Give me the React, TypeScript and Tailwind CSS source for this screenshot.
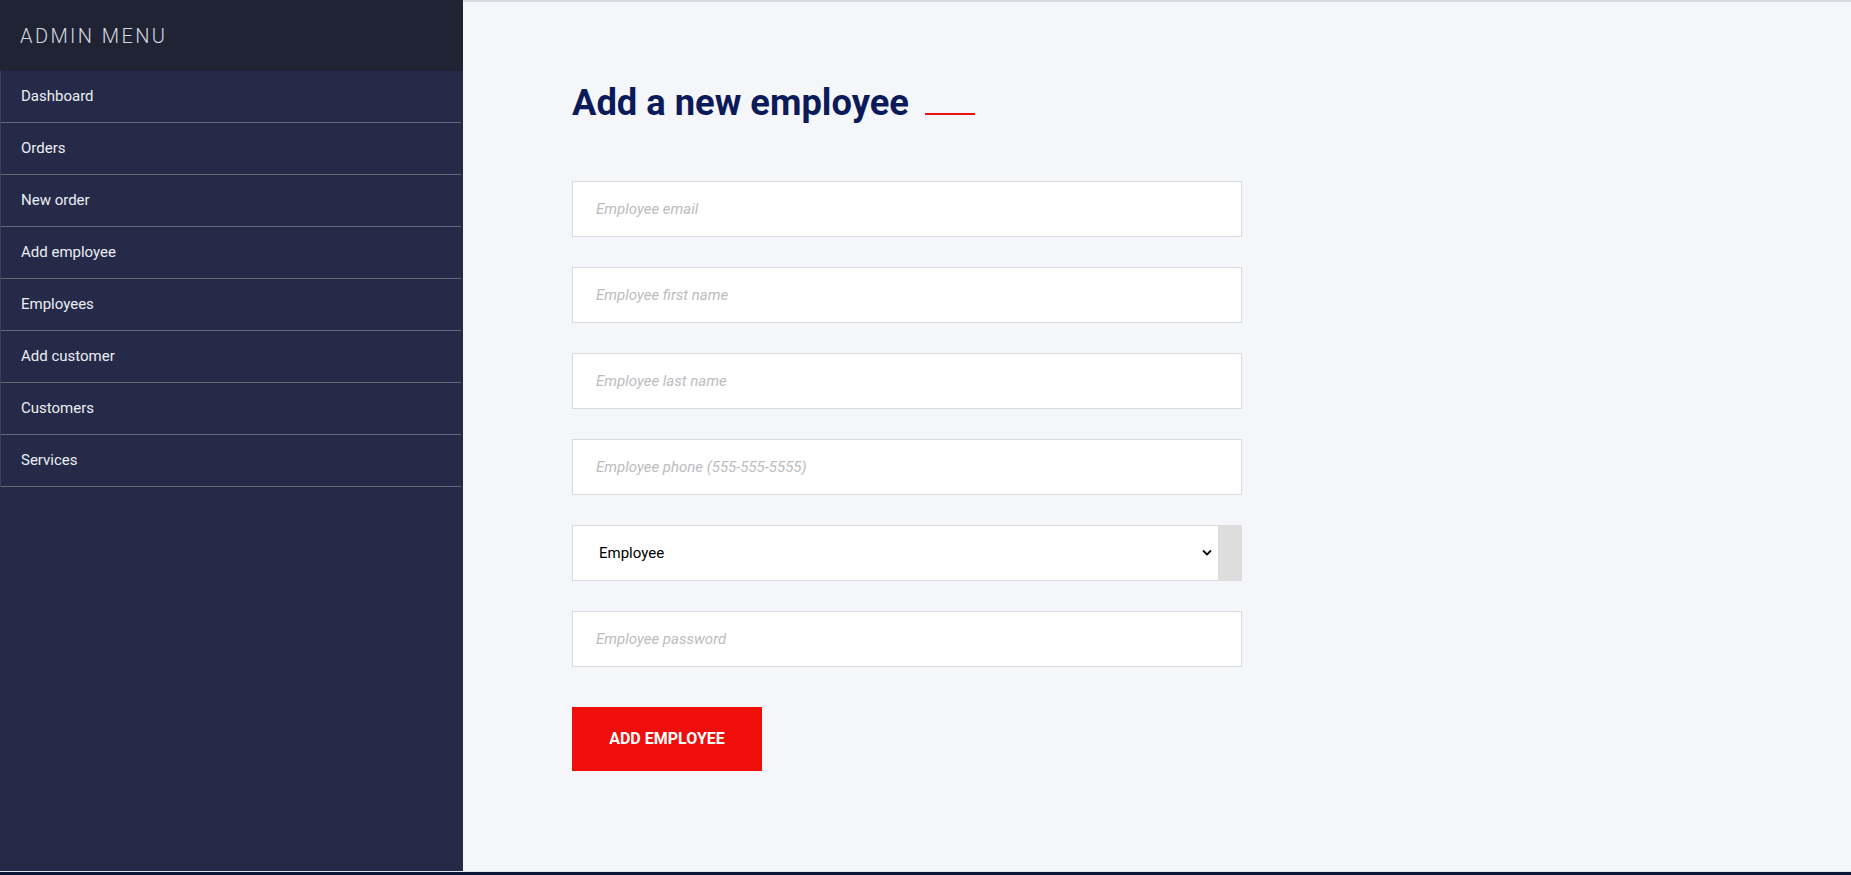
import { useState } from "react";

const MENU_ITEMS = [
  "Dashboard",
  "Orders",
  "New order",
  "Add employee",
  "Employees",
  "Add customer",
  "Customers",
  "Services",
];

const FIELDS = [
  { name: "email", type: "email", placeholder: "Employee email" },
  { name: "firstName", type: "text", placeholder: "Employee first name" },
  { name: "lastName", type: "text", placeholder: "Employee last name" },
  { name: "phone", type: "text", placeholder: "Employee phone (555-555-5555)" },
];

function Sidebar() {
  return (
    <aside className="w-[463px] flex-shrink-0 flex flex-col bg-[#242a48]">
      {/* Header */}
      <div className="h-[71px] flex items-center px-5 bg-[#1f2333]">
        <span className="text-[20px] font-light tracking-[2.4px] text-[#d6d8e0]">ADMIN MENU</span>
      </div>

      {/* Links */}
      <nav className="flex flex-col border-l border-[#3a4060] mr-[2px]">
        {MENU_ITEMS.map((item) => (
          <a
            key={item}
            href="#"
            className="h-[52px] flex items-center px-5 border-b border-[#646a7c] text-[15px] text-[#eceef3] hover:bg-[#2c3356]"
          >
            {item}
          </a>
        ))}
      </nav>
    </aside>
  );
}

function AddEmployeeForm() {
  const [role, setRole] = useState("Employee");

  return (
    <form className="flex flex-col w-[670px]" onSubmit={(e) => e.preventDefault()}>
      <div className="flex flex-col gap-[30px]">
        {FIELDS.map((f) => (
          <input
            key={f.name}
            name={f.name}
            type={f.type}
            placeholder={f.placeholder}
            className="h-[56px] w-full bg-white border border-[#dadbdf] px-[23px] text-[15px] text-[#222] placeholder:italic placeholder:text-[#bcbcc0] outline-none"
          />
        ))}

        {/* Role select */}
        <div className="relative h-[56px] flex border border-[#dadbdf] bg-white">
          <select
            value={role}
            onChange={(e) => setRole(e.target.value)}
            className="flex-1 appearance-none bg-white pl-[26px] pr-10 text-[15px] text-black outline-none"
          >
            <option>Employee</option>
            <option>Manager</option>
            <option>Admin</option>
          </select>
          <svg
            className="pointer-events-none absolute right-[29px] top-1/2 -translate-y-1/2"
            width="10"
            height="7"
            viewBox="0 0 10 7"
            fill="none"
            stroke="#111"
            strokeWidth="1.8"
            strokeLinecap="round"
            strokeLinejoin="round"
          >
            <path d="M1.5 1.5 5 5l3.5-3.5" />
          </svg>
          <div className="w-[24px] -my-px -mr-px bg-[#dddddd]" />
        </div>

        <input
          name="password"
          type="password"
          placeholder="Employee password"
          className="h-[56px] w-full bg-white border border-[#dadbdf] px-[23px] text-[15px] text-[#222] placeholder:italic placeholder:text-[#bcbcc0] outline-none"
        />
      </div>

      <button
        type="submit"
        className="mt-[40px] w-[190px] h-[64px] bg-[#ef0e0c] text-white text-[16px] font-bold uppercase"
      >
        Add employee
      </button>
    </form>
  );
}

export default function App() {
  return (
    <div className="h-[875px] flex flex-col overflow-hidden font-['Roboto','Liberation_Sans',sans-serif]">
      <div className="h-[871px] flex">
        <Sidebar />

        {/* Main */}
        <main className="flex-1 bg-[#f5f6fa] border-t-2 border-[#d7d9e0] pl-[109px] pt-[79px]">
          <div className="flex items-end gap-4 mb-[56px]">
            <h2 className="text-[36.3px] leading-[44px] font-bold text-[#0b1a59]">Add a new employee</h2>
            <span className="mb-[10px] w-[50px] h-[2px] bg-[#ee1111]" />
          </div>
          <AddEmployeeForm />
        </main>
      </div>

      {/* Footer */}
      <footer className="h-[4px] bg-[#0b1535] border-t border-[#e3e5ec]" />
    </div>
  );
}
